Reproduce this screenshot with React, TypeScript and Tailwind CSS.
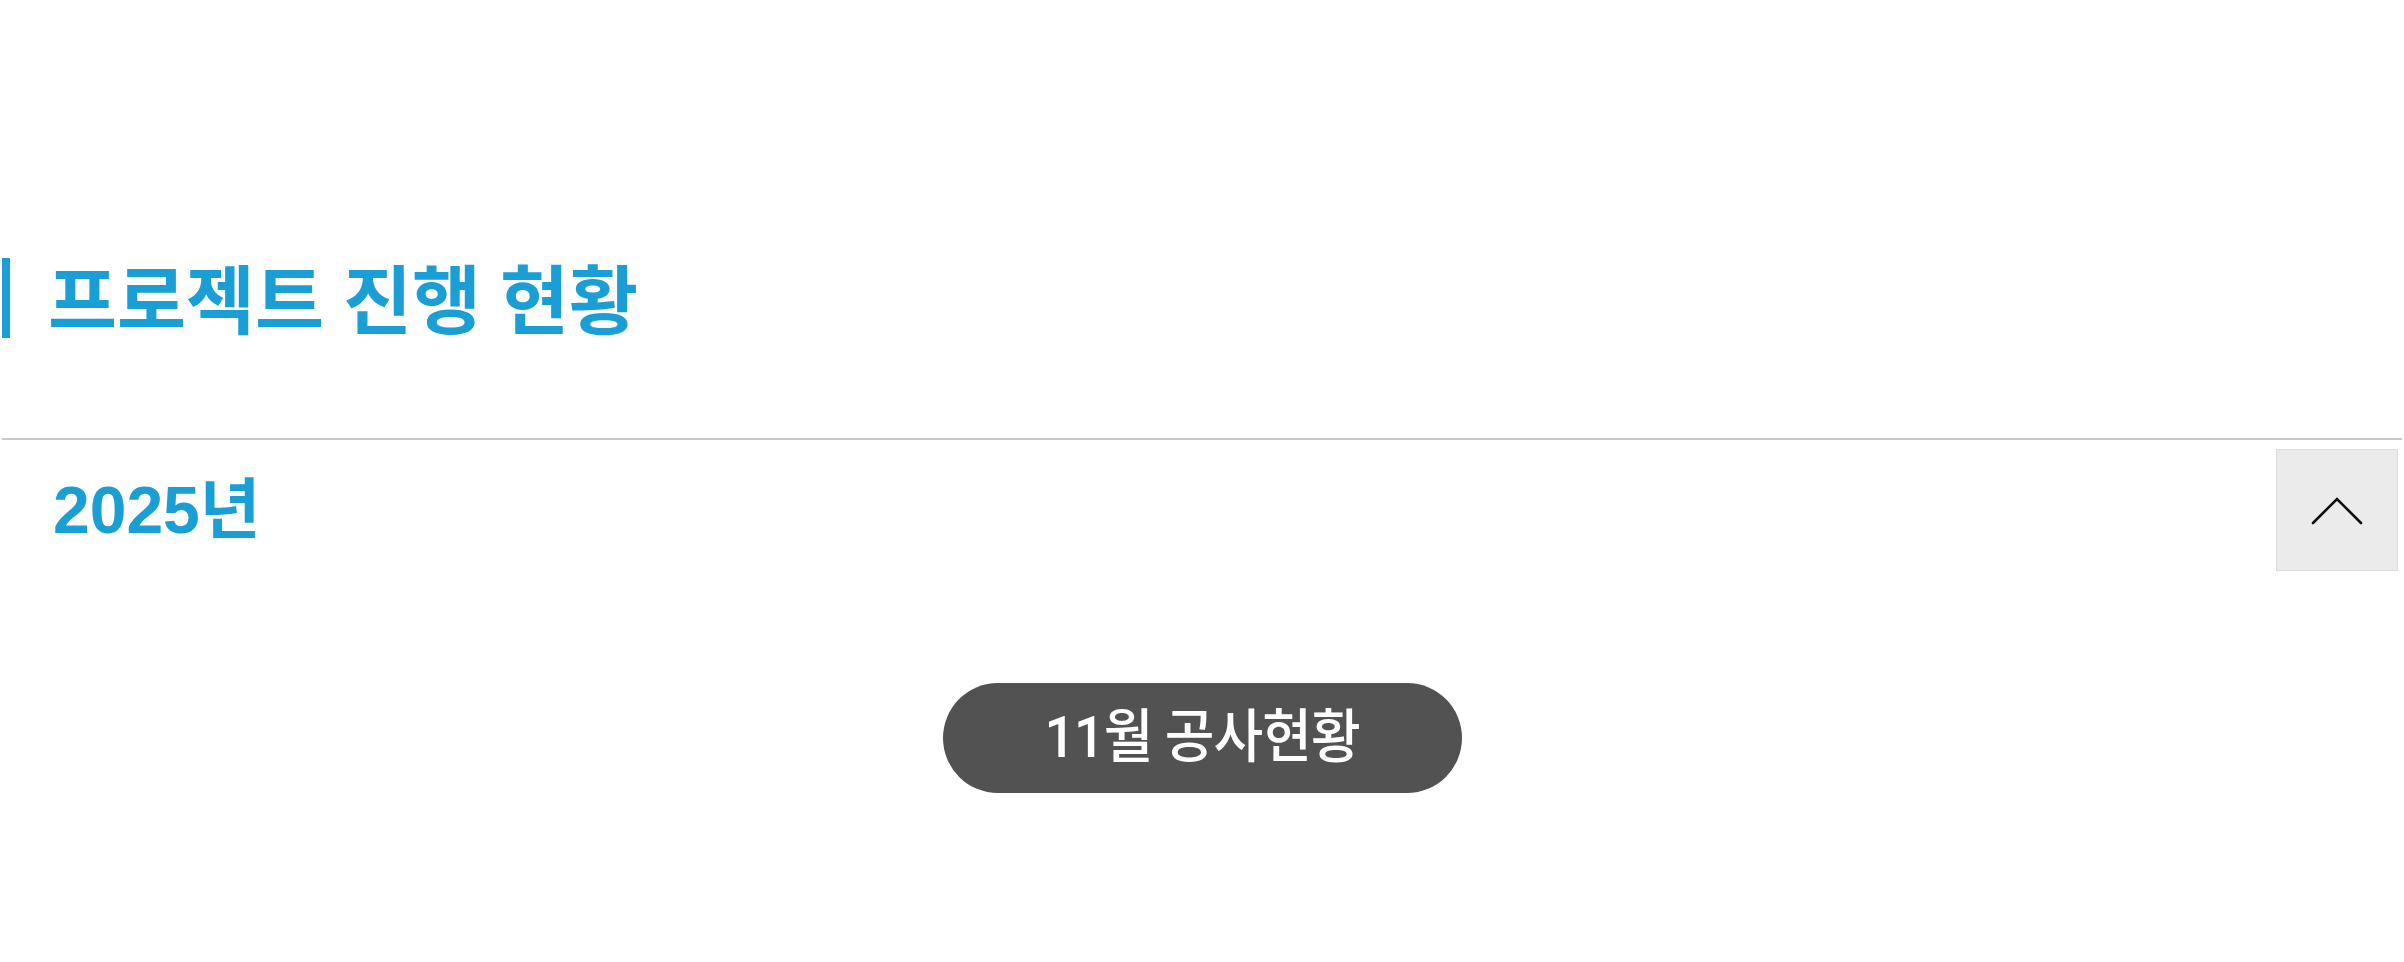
import React from 'react'

const BLUE = 'text-[#199fd6]'

function SectionTitle({ children }: { children: React.ReactNode }) {
  return (
    <div className="flex h-[80px] items-center">
      <div className="h-[80px] w-[8px] bg-[#199fd6]" />
      <h1 className="mb-[6px] ml-[38px] font-['Noto_Sans_CJK_KR'] text-[75px] leading-none font-bold text-[#199fd6] [word-spacing:2px]">
        {children}
      </h1>
    </div>
  )
}

function ChevronUp() {
  return (
    <svg width="52" height="29" viewBox="0 0 52 29" fill="none">
      <polyline points="2,27 26,3 50,27" stroke="#111" strokeWidth="2.6" strokeLinecap="round" strokeLinejoin="miter" />
    </svg>
  )
}

export default function App() {
  return (
    <div className="min-h-[962px] bg-white px-[2px]">
      <div className="pt-[258px]">
        <SectionTitle>프로젝트 진행 현황</SectionTitle>
      </div>

      <div className="mt-[100px] h-[2px] bg-[#c8c8c8]" />

      <div className="mt-[9px] flex items-center justify-between pr-[4px] pl-[51px]">
        <h2 className={`font-['Liberation_Sans','Noto_Sans_CJK_KR'] text-[66px] leading-none font-bold ${BLUE}`}>
          2025년
        </h2>
        <button className="flex h-[122px] w-[122px] items-center justify-center border border-[#dcdcdc] bg-[#ebebeb]">
          <ChevronUp />
        </button>
      </div>

      <div className="mt-[112px] flex justify-center">
        <div className="flex h-[110px] w-[519px] items-center justify-center rounded-full bg-[#525252]">
          <span className="inline-block scale-y-[1.07] font-['Roboto','Noto_Sans_CJK_KR'] text-[54px] leading-none font-medium tracking-[-1px] text-white">
            11월 공사현황
          </span>
        </div>
      </div>
    </div>
  )
}
